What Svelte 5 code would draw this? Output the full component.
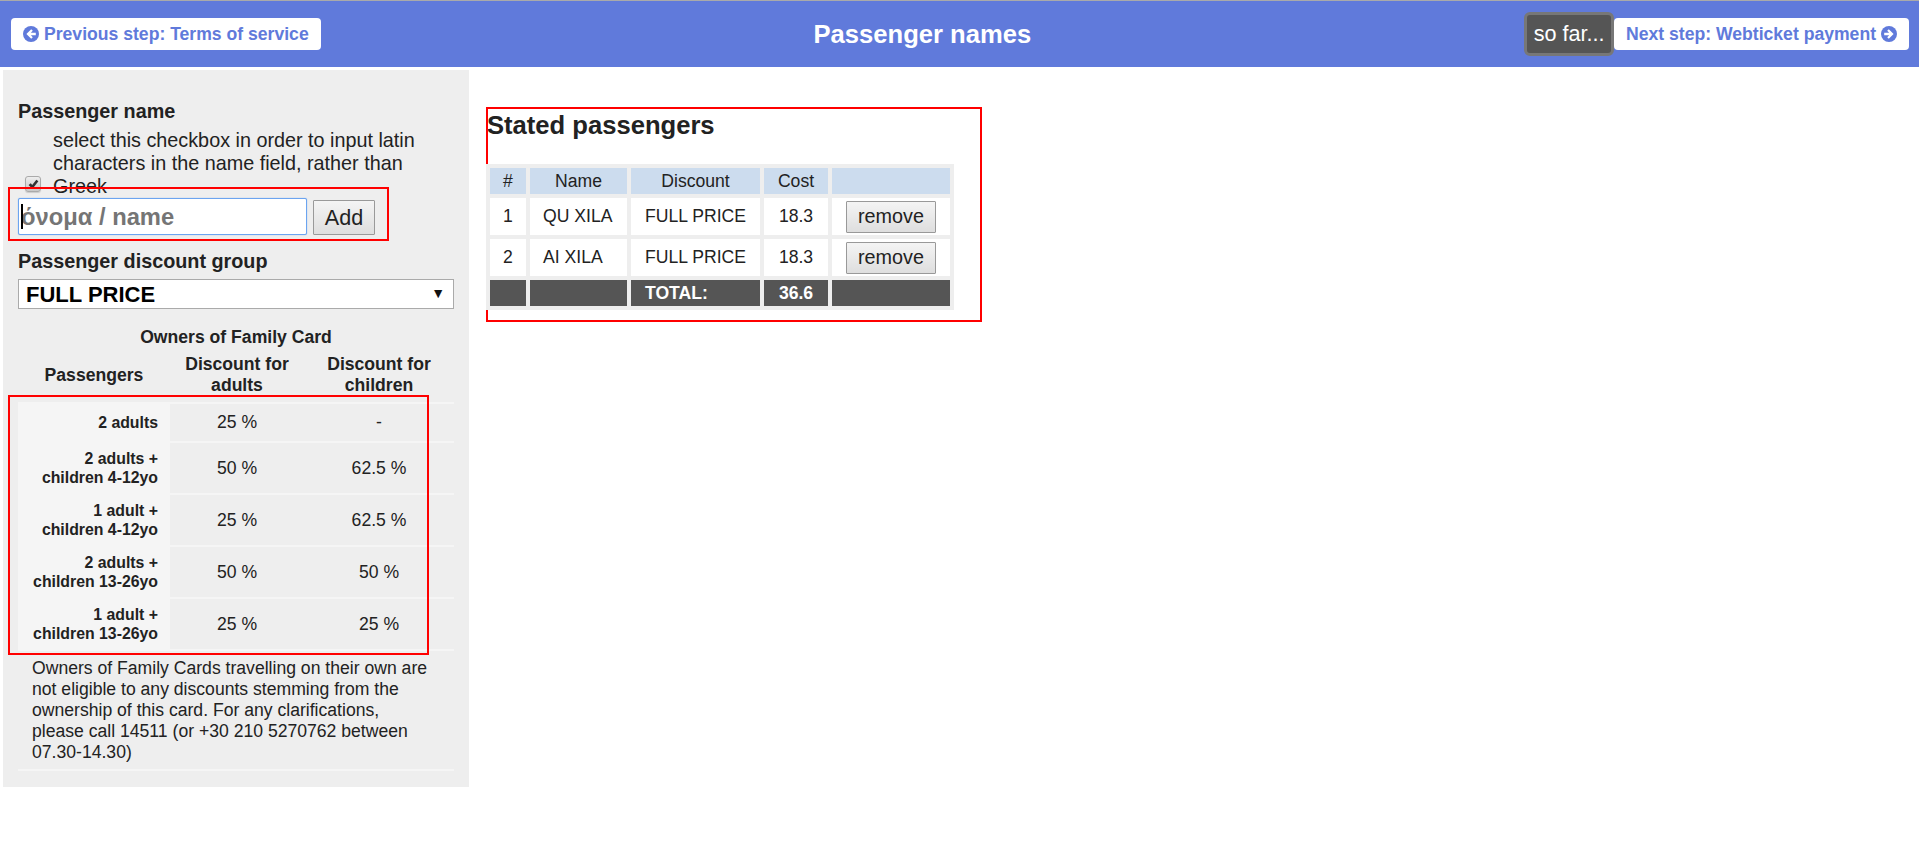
<script>
  const familyRows = [
    { who: ['2 adults'], adults: '25 %', children: '-' },
    { who: ['2 adults +', 'children 4-12yo'], adults: '50 %', children: '62.5 %' },
    { who: ['1 adult +', 'children 4-12yo'], adults: '25 %', children: '62.5 %' },
    { who: ['2 adults +', 'children 13-26yo'], adults: '50 %', children: '50 %' },
    { who: ['1 adult +', 'children 13-26yo'], adults: '25 %', children: '25 %' }
  ];

  const passengers = [
    { id: 1, name: 'QU XILA', discount: 'FULL PRICE', cost: '18.3' },
    { id: 2, name: 'AI XILA', discount: 'FULL PRICE', cost: '18.3' }
  ];
</script>

<div class="page">
  <header class="topbar">
    <a class="step" href="#prev">
      <svg viewBox="0 0 16 16" width="16" height="16" aria-hidden="true">
        <circle cx="8" cy="8" r="8" fill="currentColor" />
        <path d="M8.2 3.2 3.4 8l4.8 4.8 1.6-1.6-2-2h5V6.8h-5l2-2z" fill="#fff" />
      </svg>
      Previous step: Terms of service
    </a>
    <h1>Passenger names</h1>
    <div class="topbar-right">
      <button class="sofar">so far...</button>
      <a class="step" href="#next">
        Next step: Webticket payment
        <svg viewBox="0 0 16 16" width="16" height="16" aria-hidden="true">
          <circle cx="8" cy="8" r="8" fill="currentColor" />
          <path d="M7.8 3.2 12.6 8l-4.8 4.8-1.6-1.6 2-2h-5V6.8h5l-2-2z" fill="#fff" />
        </svg>
      </a>
    </div>
  </header>

  <main class="content">
    <aside class="panel">
      <h3>Passenger name</h3>
      <div class="latin">
        <span class="check">
          <svg viewBox="0 0 12 12" width="13" height="13" aria-hidden="true">
            <path d="M1.5 6.5 3.5 4.8l1.3 1.7L8.6 1.5l1.9 1.4-5.5 7.2z" fill="#333" />
          </svg>
        </span>
        <label for="name">select this checkbox in order to input latin characters in the name field, rather than Greek</label>
      </div>
      <div class="name-row">
        <div class="mark name-mark"></div>
        <input id="name" type="text" placeholder="όνομα / name" />
        <span class="caret"></span>
        <button class="add">Add</button>
      </div>

      <h3 class="group-title">Passenger discount group</h3>
      <div class="select-wrap">
        <select>
          <option>FULL PRICE</option>
        </select>
      </div>

      <div class="family-wrap">
        <div class="mark family-mark"></div>
        <table class="family">
          <caption>Owners of Family Card</caption>
          <thead>
            <tr>
              <th class="c1">Passengers</th>
              <th class="c2">Discount for adults</th>
              <th class="c3">Discount for children</th>
            </tr>
          </thead>
          <tbody>
            {#each familyRows as row, i}
              <tr class:first={i === 0}>
                <th class="who">{row.who[0]}{#if row.who[1]}<br />{row.who[1]}{/if}</th>
                <td>{row.adults}</td>
                <td>{row.children}</td>
              </tr>
            {/each}
            <tr>
              <td class="note" colspan="3">
                Owners of Family Cards travelling on their own are not eligible to any discounts stemming from the ownership of this card. For any clarifications, please call 14511 (or +30 210 5270762 between 07.30-14.30)
              </td>
            </tr>
          </tbody>
        </table>
      </div>
    </aside>

    <section class="stated">
      <h2>Stated passengers</h2>
      <table class="list">
        <thead>
          <tr>
            <th class="l1">#</th>
            <th class="l2">Name</th>
            <th class="l3">Discount</th>
            <th class="l4">Cost</th>
            <th class="l5"></th>
          </tr>
        </thead>
        <tbody>
          {#each passengers as p}
            <tr>
              <td>{p.id}</td>
              <td class="left">{p.name}</td>
              <td>{p.discount}</td>
              <td>{p.cost}</td>
              <td><button class="remove">remove</button></td>
            </tr>
          {/each}
        </tbody>
        <tfoot>
          <tr>
            <td></td>
            <td></td>
            <td class="total">TOTAL:</td>
            <td>36.6</td>
            <td></td>
          </tr>
        </tfoot>
      </table>
    </section>
  </main>
</div>

<style>
  :global(body) {
    margin: 0;
    background: #fff;
  }

  .page {
    font-family: "Liberation Sans", Arial, sans-serif;
    font-size: 17.6px;
    color: #222;
  }

  .topbar {
    display: flex;
    justify-content: space-between;
    align-items: center;
    height: 66px;
    padding: 0 10px 0 11px;
    background: #607adb;
    border-top: 1px solid #aaa;
  }

  .topbar h1 {
    margin: 0;
    font-size: 25.6px;
    font-weight: 700;
    color: #fff;
  }

  .topbar-right {
    display: flex;
    align-items: center;
  }

  .step {
    display: flex;
    align-items: center;
    gap: 5px;
    height: 32px;
    padding: 0 12px;
    background: #fff;
    border-radius: 4px;
    color: #607adb;
    font-size: 17.6px;
    font-weight: 700;
    text-decoration: none;
  }

  .sofar {
    box-sizing: border-box;
    width: 90px;
    height: 44px;
    padding: 0;
    background: #555;
    border: 3px solid #777;
    border-radius: 6px;
    color: #fff;
    font: 21.6px "Liberation Sans", Arial, sans-serif;
  }

  .content {
    display: flex;
    align-items: flex-start;
    gap: 17px;
    padding: 3px 0 0 3px;
  }

  .panel {
    box-sizing: border-box;
    width: 466px;
    padding: 30px 15px 16px;
    background: #eee;
  }

  h3 {
    margin: 0;
    font-size: 19.8px;
    line-height: 23px;
    font-weight: 700;
  }

  .latin {
    display: flex;
    align-items: flex-end;
    margin-top: 6px;
    height: 69px;
  }

  .check {
    box-sizing: border-box;
    display: flex;
    align-items: center;
    justify-content: center;
    width: 16px;
    height: 16px;
    margin: 0 12px 6px 7px;
    background: linear-gradient(#eee, #c8c8c8);
    border: 1px solid #aaa;
    border-radius: 3px;
    box-shadow: 0 1px 1px rgba(0, 0, 0, 0.15);
    flex: none;
  }

  .latin label {
    width: 385px;
    font-size: 19.8px;
    line-height: 23px;
  }

  .name-row {
    position: relative;
    display: flex;
    align-items: flex-end;
    gap: 6px;
    height: 37px;
  }

  .name-row input {
    box-sizing: border-box;
    width: 289px;
    height: 37px;
    padding: 0 2px;
    background: #fff;
    border: 1px solid #6ba4f0;
    border-radius: 2px;
    box-shadow: 0 0 1px 0 #6ba4f0;
    outline: none;
    font: 700 23.76px "Liberation Sans", Arial, sans-serif;
  }

  .name-row input::placeholder {
    color: #757575;
    opacity: 1;
  }

  .caret {
    position: absolute;
    left: 3px;
    top: 6px;
    width: 2px;
    height: 25px;
    background: #000;
  }

  .add,
  .remove {
    box-sizing: border-box;
    padding: 0;
    background: linear-gradient(#f4f4f4, #dedede);
    border: 1px solid #999;
    border-radius: 1px;
    color: #222;
    font-family: "Liberation Sans", Arial, sans-serif;
  }

  .add {
    width: 62px;
    height: 35px;
    font-size: 21.6px;
  }

  .mark {
    position: absolute;
    box-sizing: border-box;
    border: 2px solid #f00;
    pointer-events: none;
    z-index: 2;
  }

  .name-mark {
    left: -10px;
    top: -11px;
    width: 381px;
    height: 54px;
  }

  .group-title {
    margin-top: 15px;
  }

  .select-wrap {
    position: relative;
    margin-top: 6px;
    height: 30px;
  }

  .select-wrap::after {
    content: '▼';
    position: absolute;
    right: 9px;
    top: 6px;
    font-size: 14px;
    color: #111;
    pointer-events: none;
  }

  select {
    box-sizing: border-box;
    width: 100%;
    height: 30px;
    padding: 0 0 0 7px;
    appearance: none;
    background: #fff;
    border: 1px solid #aaa;
    border-radius: 0;
    color: #000;
    font: 700 22px "Liberation Sans", Arial, sans-serif;
  }

  .family-wrap {
    position: relative;
    margin-top: 18px;
  }

  .family-mark {
    left: -10px;
    top: 68px;
    width: 421px;
    height: 260px;
  }

  .family {
    width: 436px;
    table-layout: fixed;
    border-collapse: collapse;
  }

  caption {
    height: 21px;
    font-weight: 700;
    line-height: 21px;
  }

  .c1 { width: 152px; }
  .c2 { width: 134px; }
  .c3 { width: 150px; }

  .family thead th {
    height: 54px;
    padding: 0;
    line-height: 21px;
    font-size: 17.6px;
    border-bottom: 2px solid #f5f5f5;
    vertical-align: middle;
  }

  .family tbody tr {
    border-bottom: 2px solid #f5f5f5;
  }

  .family tbody td {
    height: 50px;
    padding: 0;
    text-align: center;
  }

  .family tbody tr.first td,
  .family tbody tr.first th {
    height: 37px;
  }

  .who {
    padding: 0 12px 0 0;
    background: #f5f5f5;
    font-size: 15.84px;
    line-height: 19px;
    text-align: right;
  }

  .family tbody td.note {
    height: auto;
    padding: 7px 21px 6px 14px;
    font-size: 17.6px;
    line-height: 21px;
    text-align: left;
  }

  .stated {
    position: relative;
    box-sizing: border-box;
    width: 496px;
    height: 215px;
    margin-top: 37px;
    border: 2px solid #f00;
  }

  .stated h2 {
    margin: 0 0 0 -1px;
    padding-top: 2px;
    font-size: 25.6px;
    line-height: 29px;
    font-weight: 700;
  }

  .list {
    position: absolute;
    left: -2px;
    top: 55px;
    table-layout: fixed;
    border-collapse: collapse;
    font-size: 17.6px;
    text-align: center;
  }

  .list th,
  .list td {
    padding: 0;
    border: 4px solid #eee;
  }

  .list th {
    height: 26px;
    background: #ccdcee;
    font-weight: 400;
  }

  .list tbody td {
    height: 37px;
    background: #fff;
  }

  .list tfoot td {
    height: 26px;
    background: #555;
    color: #fff;
    font-weight: 700;
  }

  .list .total {
    padding-left: 14px;
    text-align: left;
  }

  .list .left {
    padding-left: 13px;
    text-align: left;
  }

  .l1 { width: 36px; }
  .l2 { width: 97px; }
  .l3 { width: 129px; }
  .l4 { width: 64px; }
  .l5 { width: 118px; }

  .remove {
    display: block;
    width: 90px;
    height: 32px;
    margin: 0 auto;
    font-size: 19.8px;
  }
</style>
